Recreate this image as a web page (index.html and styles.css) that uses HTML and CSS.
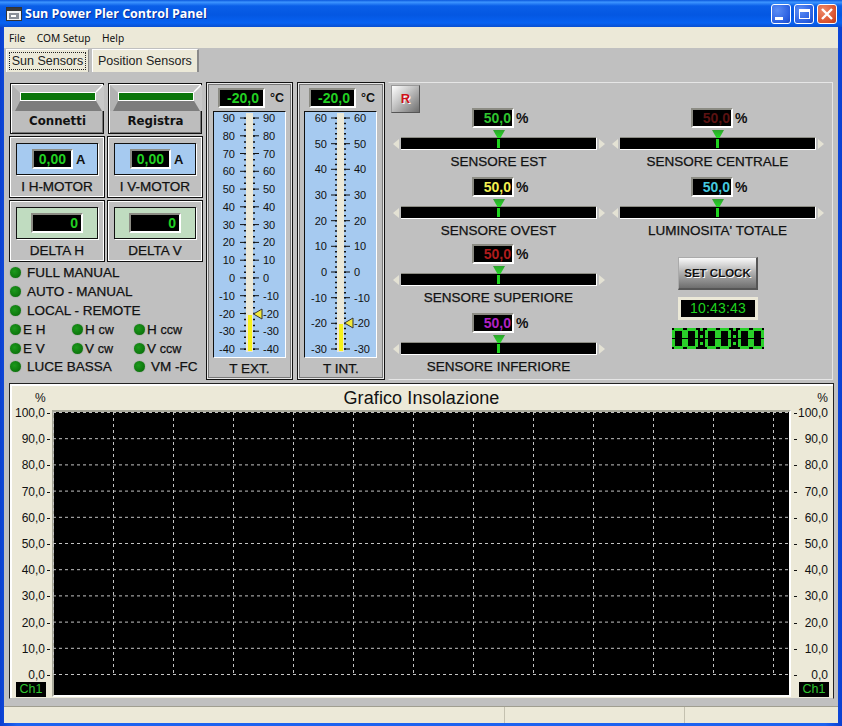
FILE: index.html
```html
<!DOCTYPE html>
<html lang="en">
<head>
  <meta charset="UTF-8" />
  <title>Sun Power Pler Control Panel</title>
  <link rel="stylesheet" href="styles.css">
</head>
<body>
  <div class="window">
    <div class="titlebar">
      <svg class="app-icon" width="16" height="16" viewBox="0 0 16 16">
        <rect x="0.5" y="1.5" width="15" height="13" fill="#f4f4f4" stroke="#333" />
        <rect x="1" y="2" width="14" height="3" fill="#3a3a3a" />
        <rect x="3" y="7" width="10" height="6" fill="#8a8f98" />
        <rect x="5" y="9" width="5" height="2" fill="#fff" />
      </svg>
      <span class="title-text">Sun Power Pler Control Panel</span>
      <div class="win-buttons">
        <div class="win-btn"><span class="glyph-min"></span></div>
        <div class="win-btn"><span class="glyph-max"></span></div>
        <div class="win-btn close">
          <svg width="14" height="14" viewBox="0 0 14 14"><path d="M2 2 L12 12 M12 2 L2 12" stroke="#fff" stroke-width="2.4" /></svg>
        </div>
      </div>
    </div>

    <div class="menubar">
      <span>File</span>
      <span>COM Setup</span>
      <span>Help</span>
    </div>

    <div class="tabs">
      <div class="tab active"><span>Sun Sensors</span></div>
      <div class="tab">Position Sensors</div>
    </div>

    <div class="pane">
      <div class="top">
        <div class="left-col">
          <div class="pair">
            <div class="push-btn">
              <svg width="92" height="28" viewBox="0 0 92 28">
                <polygon points="0,0 92,0 84,8 8,8" fill="#c4c4c4" />
                <polygon points="0,0 8,8 8,15 3,26 0,26" fill="#b2b2b2" />
                <polygon points="92,0 84,8 84,15 90,26 92,26" fill="#c8c8c8" />
                <path d="M91 0 L84 7" stroke="#fff" stroke-width="1.5" />
                <polygon points="8,16 84,16 90,26 3,26" fill="#7d7d7d" />
                <rect x="8" y="7" width="76" height="9" fill="#fff" />
                <rect x="9" y="8" width="74" height="7" fill="#0a760a" />
              </svg>
              <span>Connetti</span>
            </div>
            <div class="push-btn">
              <svg width="92" height="28" viewBox="0 0 92 28">
                <polygon points="0,0 92,0 84,8 8,8" fill="#c4c4c4" />
                <polygon points="0,0 8,8 8,15 3,26 0,26" fill="#b2b2b2" />
                <polygon points="92,0 84,8 84,15 90,26 92,26" fill="#c8c8c8" />
                <path d="M91 0 L84 7" stroke="#fff" stroke-width="1.5" />
                <polygon points="8,16 84,16 90,26 3,26" fill="#7d7d7d" />
                <rect x="8" y="7" width="76" height="9" fill="#fff" />
                <rect x="9" y="8" width="74" height="7" fill="#0a760a" />
              </svg>
              <span>Registra</span>
            </div>
          </div>

          <div class="pair">
            <div class="meter">
              <div class="meter-face blue">
                <div class="lcd amp">0,00</div><b>A</b>
              </div>
              <div class="meter-label">I H-MOTOR</div>
            </div>
            <div class="meter">
              <div class="meter-face blue">
                <div class="lcd amp">0,00</div><b>A</b>
              </div>
              <div class="meter-label">I V-MOTOR</div>
            </div>
          </div>

          <div class="pair">
            <div class="meter">
              <div class="meter-face green">
                <div class="lcd delta">0</div>
              </div>
              <div class="meter-label">DELTA H</div>
            </div>
            <div class="meter">
              <div class="meter-face green">
                <div class="lcd delta">0</div>
              </div>
              <div class="meter-label">DELTA V</div>
            </div>
          </div>

          <div class="leds">
            <div class="led-row"><i class="led"></i><span class="wide">FULL MANUAL</span></div>
            <div class="led-row"><i class="led"></i><span class="wide">AUTO - MANUAL</span></div>
            <div class="led-row"><i class="led"></i><span class="wide">LOCAL - REMOTE</span></div>
            <div class="led-row triple">
              <div><i class="led"></i><span>E H</span></div>
              <div><i class="led"></i><span>H <small>cw</small></span></div>
              <div><i class="led"></i><span>H <small>ccw</small></span></div>
            </div>
            <div class="led-row triple">
              <div><i class="led"></i><span>E V</span></div>
              <div><i class="led"></i><span>V <small>cw</small></span></div>
              <div><i class="led"></i><span>V <small>ccw</small></span></div>
            </div>
            <div class="led-row triple last">
              <div class="span-two"><i class="led"></i><span class="wide">LUCE BASSA</span></div>
              <div><i class="led"></i><span class="wide">VM -FC</span></div>
            </div>
          </div>
        </div>

        <div class="thermo">
          <div class="thermo-head"><div class="lcd temp">-20,0</div><b>°C</b></div>
          <div class="thermo-face">
            <svg width="71" height="245" viewBox="0 0 71 245">
              <line class="minor" x1="35.5" y1="5.5" x2="35.5" y2="238" stroke-dasharray="1.5 4.42" />
              <path class="major" d="M26 6H45M26 23.8H45M26 41.5H45M26 59.3H45M26 77.1H45M26 94.8H45M26 112.6H45M26 130.4H45M26 148.2H45M26 165.9H45M26 183.7H45M26 201.5H45M26 219.2H45M26 237H45" />
              <rect class="tube" x="32" y="1" width="7" height="239" />
              <rect class="mercury" x="34" y="203" width="4" height="36" />
              <polygon class="pointer" points="39.5,202 48,197 48,207" />
              <g class="scale-left">
                <text x="21" y="10">90</text><text x="21" y="27.8">80</text><text x="21" y="45.5">70</text>
                <text x="21" y="63.3">60</text><text x="21" y="81.1">50</text><text x="21" y="98.8">40</text>
                <text x="21" y="116.6">30</text><text x="21" y="134.4">20</text><text x="21" y="152.2">10</text>
                <text x="21" y="169.9">0</text><text x="21" y="187.7">-10</text><text x="21" y="205.5">-20</text>
                <text x="21" y="223.2">-30</text><text x="21" y="241">-40</text>
              </g>
              <g class="scale-right">
                <text x="49" y="10">90</text><text x="49" y="27.8">80</text><text x="49" y="45.5">70</text>
                <text x="49" y="63.3">60</text><text x="49" y="81.1">50</text><text x="49" y="98.8">40</text>
                <text x="49" y="116.6">30</text><text x="49" y="134.4">20</text><text x="49" y="152.2">10</text>
                <text x="49" y="169.9">0</text><text x="49" y="187.7">-10</text><text x="49" y="205.5">-20</text>
                <text x="49" y="223.2">-30</text><text x="49" y="241">-40</text>
              </g>
            </svg>
          </div>
          <div class="thermo-label">T EXT.</div>
        </div>

        <div class="thermo second">
          <div class="thermo-head"><div class="lcd temp">-20,0</div><b>°C</b></div>
          <div class="thermo-face">
            <svg width="71" height="245" viewBox="0 0 71 245">
              <line class="minor" x1="35.5" y1="5.5" x2="35.5" y2="238" stroke-dasharray="1.5 3.63" />
              <path class="major" d="M26 6H45M26 31.7H45M26 57.3H45M26 83H45M26 108.7H45M26 134.3H45M26 160H45M26 185.7H45M26 211.3H45M26 237H45" />
              <rect class="tube" x="32" y="1" width="7" height="239" />
              <rect class="mercury" x="34" y="212" width="4" height="27" />
              <polygon class="pointer" points="39.5,211 48,206 48,216" />
              <g class="scale-left">
                <text x="22" y="10">60</text><text x="22" y="35.7">50</text><text x="22" y="61.3">40</text>
                <text x="22" y="87">30</text><text x="22" y="112.7">20</text><text x="22" y="138.3">10</text>
                <text x="22" y="164">0</text><text x="22" y="189.7">-10</text><text x="22" y="215.3">-20</text>
                <text x="22" y="241">-30</text>
              </g>
              <g class="scale-right">
                <text x="49" y="10">60</text><text x="49" y="35.7">50</text><text x="49" y="61.3">40</text>
                <text x="49" y="87">30</text><text x="49" y="112.7">20</text><text x="49" y="138.3">10</text>
                <text x="49" y="164">0</text><text x="49" y="189.7">-10</text><text x="49" y="215.3">-20</text>
                <text x="49" y="241">-30</text>
              </g>
            </svg>
          </div>
          <div class="thermo-label">T INT.</div>
        </div>

        <div class="sensors">
          <div class="reset-btn">R</div>
          <div class="sensor-grid">
            <div class="sensor">
              <div class="reading"><div class="lcd pct c-green">50,0</div><b>%</b></div>
              <div class="marker"></div>
              <div class="slider"><i class="arrow-l"></i><div class="track"></div><i class="arrow-r"></i></div>
              <div class="sensor-label">SENSORE EST</div>
            </div>
            <div class="sensor">
              <div class="reading"><div class="lcd pct c-darkred">50,0</div><b>%</b></div>
              <div class="marker"></div>
              <div class="slider"><i class="arrow-l"></i><div class="track"></div><i class="arrow-r"></i></div>
              <div class="sensor-label">SENSORE CENTRALE</div>
            </div>
            <div class="sensor">
              <div class="reading"><div class="lcd pct c-yellow">50,0</div><b>%</b></div>
              <div class="marker"></div>
              <div class="slider"><i class="arrow-l"></i><div class="track"></div><i class="arrow-r"></i></div>
              <div class="sensor-label">SENSORE OVEST</div>
            </div>
            <div class="sensor">
              <div class="reading"><div class="lcd pct c-cyan">50,0</div><b>%</b></div>
              <div class="marker"></div>
              <div class="slider"><i class="arrow-l"></i><div class="track"></div><i class="arrow-r"></i></div>
              <div class="sensor-label">LUMINOSITA' TOTALE</div>
            </div>
            <div class="sensor">
              <div class="reading"><div class="lcd pct c-red">50,0</div><b>%</b></div>
              <div class="marker"></div>
              <div class="slider"><i class="arrow-l"></i><div class="track"></div><i class="arrow-r"></i></div>
              <div class="sensor-label">SENSORE SUPERIORE</div>
            </div>
            <div class="clock-box">
              <div class="set-clock">SET CLOCK</div>
              <div class="clock-time">10:43:43</div>
              <div class="seg-display">
                <i></i><i></i><em></em><i></i><i></i><em></em><i></i><i></i>
              </div>
            </div>
            <div class="sensor">
              <div class="reading"><div class="lcd pct c-purple">50,0</div><b>%</b></div>
              <div class="marker"></div>
              <div class="slider"><i class="arrow-l"></i><div class="track"></div><i class="arrow-r"></i></div>
              <div class="sensor-label">SENSORE INFERIORE</div>
            </div>
          </div>
        </div>
      </div>

      <div class="chart">
        <div class="chart-head">
          <span>%</span>
          <span class="chart-title">Grafico Insolazione</span>
          <span>%</span>
        </div>
        <div class="chart-body">
          <div class="axis left">
            <div class="axis-labels">
              <span>100,0</span><span>90,0</span><span>80,0</span><span>70,0</span><span>60,0</span><span>50,0</span>
              <span>40,0</span><span>30,0</span><span>20,0</span><span>10,0</span><span>0,0</span>
            </div>
            <div class="ch-tag">Ch1</div>
          </div>
          <div class="plot">
            <svg width="735" height="283" viewBox="0 0 735 283">
              <g class="grid-lines">
                <path d="M-1 0.5H736M-1 26.7H736M-1 52.9H736M-1 79.1H736M-1 105.3H736M-1 131.5H736M-1 157.7H736M-1 183.9H736M-1 210.1H736M-1 236.3H736M-1 262.5H736" />
                <path d="M-0.5 0V262M59.5 0V262M119.5 0V262M179.5 0V262M239.5 0V262M299.5 0V262M359.5 0V262M419.5 0V262M479.5 0V262M539.5 0V262M599.5 0V262M659.5 0V262M719.5 0V262" />
              </g>
            </svg>
          </div>
          <div class="axis right">
            <div class="axis-labels">
              <span>100,0</span><span>90,0</span><span>80,0</span><span>70,0</span><span>60,0</span><span>50,0</span>
              <span>40,0</span><span>30,0</span><span>20,0</span><span>10,0</span><span>0,0</span>
            </div>
            <div class="ch-tag">Ch1</div>
          </div>
        </div>
      </div>
    </div>

    <div class="statusbar">
      <div></div>
      <div></div>
      <div></div>
    </div>
  </div>
</body>
</html>
```

FILE: styles.css
```css
html, body {
  margin: 0;
  padding: 0;
  background: #0a3fd0;
}

.window {
  width: 842px;
  height: 726px;
  box-sizing: border-box;
  padding: 0 4px 3px;
  display: flex;
  flex-direction: column;
  background: linear-gradient(90deg, #0a3fd0, #1c62f0 2%, #1c62f0 98%, #0a3fd0);
  font-family: "Liberation Sans", Arial, sans-serif;
  color: #111;
  overflow: hidden;
}

/* Title bar */
.titlebar {
  height: 27px;
  flex: none;
  margin: 0 -4px;
  padding: 0 5px 0 6px;
  display: flex;
  align-items: center;
  background: linear-gradient(180deg, #0a57dc 0%, #3d95ff 8%, #0a5fe8 22%, #0457e2 55%, #0862f2 85%, #0a4fd0 100%);
}

.title-text {
  margin-left: 3px;
  color: #fff;
  font-family: "Open Sans", sans-serif;
  font-weight: 700;
  font-size: 12.5px;
  text-shadow: 1px 1px 0 #0a2f9a;
}

.win-buttons {
  margin-left: auto;
  display: flex;
  gap: 3px;
}

.win-btn {
  width: 20px;
  height: 20px;
  box-sizing: border-box;
  border: 1px solid #fff;
  border-radius: 3px;
  background: radial-gradient(circle at 30% 30%, #5c8ef5, #2a5fe0 70%, #1b46c0);
  display: flex;
  align-items: center;
  justify-content: center;
  position: relative;
}

.win-btn.close {
  background: radial-gradient(circle at 30% 30%, #ee8a6a, #d9512c 70%, #b93a18);
}

.glyph-min {
  width: 8px;
  height: 3px;
  background: #fff;
  margin: 9px 5px 0 0;
}

.glyph-max {
  width: 11px;
  height: 10px;
  box-sizing: border-box;
  border: 1px solid #fff;
  border-top-width: 3px;
}

/* Menu and tabs */
.menubar {
  height: 21px;
  flex: none;
  padding-left: 5px;
  display: flex;
  align-items: center;
  gap: 11.5px;
  background: #ece9d8;
  font-family: "Noto Sans", sans-serif;
  font-size: 10.2px;
}

.tabs {
  height: 25px;
  flex: none;
  padding: 1px 0 0 2px;
  box-sizing: border-box;
  display: flex;
  gap: 3px;
  background: #c0c0c0;
  font-size: 12.5px;
}

.tab {
  height: 23px;
  padding: 0 5px;
  box-sizing: border-box;
  display: flex;
  align-items: center;
  background: #ece9d8;
  border-top: 1px solid #fff;
  border-left: 1px solid #fff;
  border-right: 2px solid #8a8a8a;
  color: #222;
}

.tab.active {
  width: 83px;
  padding: 2px;
  border-right: 1px solid #8a8a8a;
}

.tab.active span {
  flex: 1;
  height: 100%;
  box-sizing: border-box;
  border: 1px dotted #222;
  display: flex;
  align-items: center;
  justify-content: center;
}

/* Main pane */
.pane {
  flex: 1;
  padding: 9px 0 7px 5px;
  background: #c0c0c0;
}

.top {
  height: 298px;
  display: flex;
}

.left-col {
  width: 197px;
  flex: none;
}

.pair {
  display: flex;
  gap: 2px;
  margin-bottom: 2px;
}

.push-btn {
  width: 94px;
  height: 51px;
  margin: 1px 1px 0;
  box-sizing: border-box;
  border: 1px solid #111;
  box-shadow: inset 1px 1px 0 #fff, inset -1px -1px 0 #777;
  padding: 1px 0 0 1px;
  background: #bdbdbd;
  text-align: center;
  font-family: "DejaVu Sans", sans-serif;
  font-weight: 700;
  font-size: 11.8px;
}

.push-btn svg {
  display: block;
}

.push-btn span {
  display: block;
  margin-top: 1px;
}

.meter {
  width: 96px;
  height: 62px;
  box-sizing: border-box;
  border: 1px solid #111;
  box-shadow: inset 1px 1px 0 #fff, inset -1px -1px 0 #fff;
  padding: 6px 6px 0;
  background: #c0c0c0;
}

.meter-face {
  height: 32px;
  box-sizing: border-box;
  border: 1px solid #111;
  box-shadow: 1px 1px 0 #fff;
  display: flex;
  align-items: center;
  justify-content: center;
  gap: 3px;
}

.meter-face.blue {
  background: #a6caf0;
  justify-content: flex-start;
  padding-left: 15px;
}

.meter-face.green {
  background: #c0dcc0;
}

.meter-face b {
  font-size: 13px;
}

.meter-label {
  margin-top: 4px;
  text-align: center;
  font-size: 13.5px;
  -webkit-text-stroke: 0.25px #111;
}

.lcd {
  box-sizing: border-box;
  height: 20px;
  background: #000;
  border: 2px solid;
  border-color: #8c8c84 #fff #fff #8c8c84;
  color: #22d022;
  font-weight: 700;
  font-size: 14px;
  line-height: 16px;
  text-align: right;
}

.lcd.amp {
  width: 41px;
  padding-right: 5px;
}

.lcd.delta {
  width: 52px;
  padding-right: 3px;
}

.lcd.temp {
  width: 47px;
  padding-right: 4px;
}

.lcd.pct {
  width: 42px;
  padding-right: 1px;
}

.c-green { color: #2fc42f; }
.c-yellow { color: #f2ee50; }
.c-darkred { color: #5a1212; }
.c-cyan { color: #45c8de; }
.c-red { color: #ae1c1c; }
.c-purple { color: #b322c4; }

/* LEDs */
.leds {
  margin-top: -1px;
}

.led-row {
  height: 18.9px;
  display: flex;
  align-items: center;
  font-size: 13.5px;
  white-space: nowrap;
  -webkit-text-stroke: 0.25px #111;
}

.led-row.triple > div {
  width: 62px;
  display: flex;
  align-items: center;
}

.led-row.triple > .span-two {
  width: 124px;
}

.led-row small {
  font-size: 12.5px;
}

.led {
  display: block;
  width: 11px;
  height: 11px;
  margin: 0 0 0 1px;
  flex: none;
  border-radius: 50%;
  background: radial-gradient(circle at 40% 40%, #1c9a1c, #0b720b 75%);
  box-shadow: 0 0 1px 0 #446644;
}

.led + span {
  margin-left: 2px;
}

.led + .wide {
  margin-left: 6px;
}

/* Thermometers */
.thermo {
  width: 87px;
  height: 298px;
  flex: none;
  box-sizing: border-box;
  border: 1px solid #111;
  box-shadow: inset 0 0 0 1px #e8e8e8, inset 0 0 0 2px #777;
  padding: 5px 6px 0;
}

.thermo.second {
  width: 88px;
  margin-left: 4px;
}

.thermo-head {
  height: 23px;
  display: flex;
  gap: 5px;
  padding-left: 5px;
  font-size: 12.5px;
}

.thermo-head b {
  line-height: 20px;
}

.thermo-face {
  width: 73px;
  height: 247px;
  box-sizing: border-box;
  border: 1px solid;
  border-color: #111 #fff #fff #111;
  background: #a6caf0;
}

.thermo-face svg {
  display: block;
  overflow: visible;
  font-size: 11px;
  fill: #111;
}

.minor {
  stroke: #111;
  stroke-width: 11;
}

.major {
  stroke: #111;
  stroke-width: 1;
  fill: none;
}

.tube {
  fill: #ece9d8;
}

.mercury {
  fill: #f6f21c;
}

.pointer {
  fill: #f2e83a;
  stroke: #333;
  stroke-width: 1;
}

.scale-left {
  text-anchor: end;
}

.scale-right {
  text-anchor: start;
}

.thermo-label {
  margin-top: 3px;
  text-align: center;
  font-size: 13.5px;
  -webkit-text-stroke: 0.25px #111;
}

/* Sensor panel */
.sensors {
  width: 445px;
  height: 298px;
  margin-left: 3px;
  flex: none;
  box-sizing: border-box;
  border: 1px solid #e6e6e6;
  border-left-color: #c0c0c0;
  position: relative;
  padding-top: 25px;
}

.reset-btn {
  position: absolute;
  left: 2px;
  top: 2px;
  width: 29px;
  height: 28px;
  box-sizing: border-box;
  background: linear-gradient(135deg, #fff, #c8c8c8 40%, #6e6e6e);
  border: 1px solid #999;
  border-right-color: #555;
  border-bottom-color: #555;
  color: #d01018;
  font-weight: 700;
  font-size: 13px;
  line-height: 26px;
  text-align: center;
  text-shadow: 1px 1px 0 #fff;
}

.sensor-grid {
  display: grid;
  grid-template-columns: 219px 219px;
  grid-template-rows: 69px 67px 69px 67px;
}

.sensor {
  display: flex;
  flex-direction: column;
  align-items: center;
  height: 62px;
}

.reading {
  display: flex;
  align-items: center;
  font-size: 14px;
  height: 20px;
  margin-left: 1px;
}

.reading b {
  width: 10px;
  margin-left: 2px;
}

.marker {
  width: 12px;
  height: 10px;
  margin: 2px 0 0 1px;
  background: linear-gradient(180deg, #2fa02f, #22e022);
  clip-path: polygon(0 0, 100% 0, 62% 100%, 38% 100%);
  position: relative;
  z-index: 1;
}

.slider {
  height: 13px;
  margin-top: -1px;
  display: flex;
  align-items: center;
  gap: 2px;
}

.track {
  width: 196px;
  height: 13px;
  box-sizing: border-box;
  background: linear-gradient(#1fd41f, #1fd41f) center / 3px 9px no-repeat, #000;
  border-top: 1px solid #8c8c84;
  border-bottom: 1px solid #fff;
  border-right: 1px solid #fff;
}

.arrow-l,
.arrow-r {
  display: block;
  width: 0;
  height: 0;
  border-top: 5px solid transparent;
  border-bottom: 5px solid transparent;
}

.arrow-l {
  border-right: 6px solid #e4e2d4;
}

.arrow-r {
  border-left: 6px solid #e4e2d4;
}

.sensor-label {
  margin-top: 4px;
  font-size: 13.5px;
  line-height: 16px;
  -webkit-text-stroke: 0.25px #111;
}

.clock-box {
  grid-row: span 2;
  display: flex;
  flex-direction: column;
  align-items: center;
  padding: 13px 0 0 1px;
}

.set-clock {
  width: 80px;
  height: 33px;
  box-sizing: border-box;
  background: linear-gradient(180deg, #fafafa, #b4b4b4 45%, #6e6e6e);
  border: 1px solid #aaa;
  border-right: 2px solid #555;
  border-bottom: 2px solid #555;
  font-weight: 700;
  font-size: 11.5px;
  line-height: 30px;
  text-align: center;
  text-shadow: 1px 1px 0 #fff;
}

.clock-time {
  width: 80px;
  height: 23px;
  margin-top: 7px;
  box-sizing: border-box;
  border: 3px solid #ece9d8;
  background: #000;
  color: #1fd41f;
  font-size: 14px;
  letter-spacing: 0.2px;
  line-height: 17px;
  text-align: center;
}

.seg-display {
  margin-top: 8px;
  height: 21px;
  display: flex;
  background: #000;
}

/* six segments of one digit, small black gaps at the corners */
.seg-display i {
  display: block;
  width: 13px;
  background:
    linear-gradient(#2ad02a, #2ad02a) 2px 0 / 9px 3px no-repeat,
    linear-gradient(#2ad02a, #2ad02a) 2px 18px / 9px 3px no-repeat,
    linear-gradient(#2ad02a, #2ad02a) 0 2px / 3px 8px no-repeat,
    linear-gradient(#2ad02a, #2ad02a) 10px 2px / 3px 8px no-repeat,
    linear-gradient(#2ad02a, #2ad02a) 0 11px / 3px 8px no-repeat,
    linear-gradient(#2ad02a, #2ad02a) 10px 11px / 3px 8px no-repeat;
}

.seg-display em {
  display: block;
  width: 7px;
  background: radial-gradient(circle, #2ad02a 1.5px, transparent 2px) center 5px / 7px 7px repeat-y;
}

/* Chart */
.chart {
  width: 825px;
  height: 316px;
  margin-top: 3px;
  box-sizing: border-box;
  border: 1px solid #222;
  border-bottom-color: #c0c0c0;
  box-shadow: inset 2px 2px 0 #fff;
  padding: 2px 0 0 2px;
  background: #ece9d8;
}

.chart-head {
  height: 24px;
  padding: 0 5px 0 23px;
  display: flex;
  justify-content: space-between;
  align-items: center;
  font-size: 12px;
}

.chart-title {
  font-size: 18px;
  letter-spacing: 0.1px;
  margin-right: 20px;
}

.chart-body {
  display: flex;
  height: 287px;
}

.axis {
  flex: none;
  font-size: 12px;
}

.axis.left {
  width: 40px;
}

.axis.right {
  width: 41px;
}

.axis-labels {
  height: 276px;
  margin-top: -4px;
  display: flex;
  flex-direction: column;
  justify-content: space-between;
  text-align: right;
}

.axis-labels span {
  height: 14px;
  line-height: 14px;
  position: relative;
  padding-right: 7px;
}

.axis.right .axis-labels span {
  padding-right: 4px;
}

.axis-labels span::after {
  content: "";
  position: absolute;
  top: 7px;
  right: 2px;
  width: 3px;
  height: 1px;
  background: #111;
}

.axis.right .axis-labels span::after {
  right: auto;
  left: 3px;
}

.ch-tag {
  width: 30px;
  height: 15px;
  margin: 0 0 0 4px;
  background: #000;
  color: #2fc42f;
  font-size: 12.5px;
  line-height: 15px;
  text-align: center;
}

.axis.right .ch-tag {
  margin-left: 8px;
}

.plot {
  width: 739px;
  flex: none;
  box-sizing: border-box;
  border: 2px solid;
  border-color: #a8a89a #fff #fff #a8a89a;
  background: #000;
}

.plot svg {
  display: block;
  overflow: visible;
}

.grid-lines {
  fill: none;
  stroke: #c4c4c4;
  stroke-width: 1;
  stroke-dasharray: 3 3;
}

/* Status bar */
.statusbar {
  height: 17px;
  flex: none;
  display: flex;
  box-sizing: border-box;
  border-top: 1px solid #a09e90;
  background: #ece9d8;
}

.statusbar div {
  box-sizing: border-box;
  border-right: 1px solid #c4c1b0;
}

.statusbar div:nth-child(1) {
  width: 501px;
}

.statusbar div:nth-child(2) {
  width: 180px;
}

.statusbar div:nth-child(3) {
  flex: 1;
  border-right: none;
}
```
